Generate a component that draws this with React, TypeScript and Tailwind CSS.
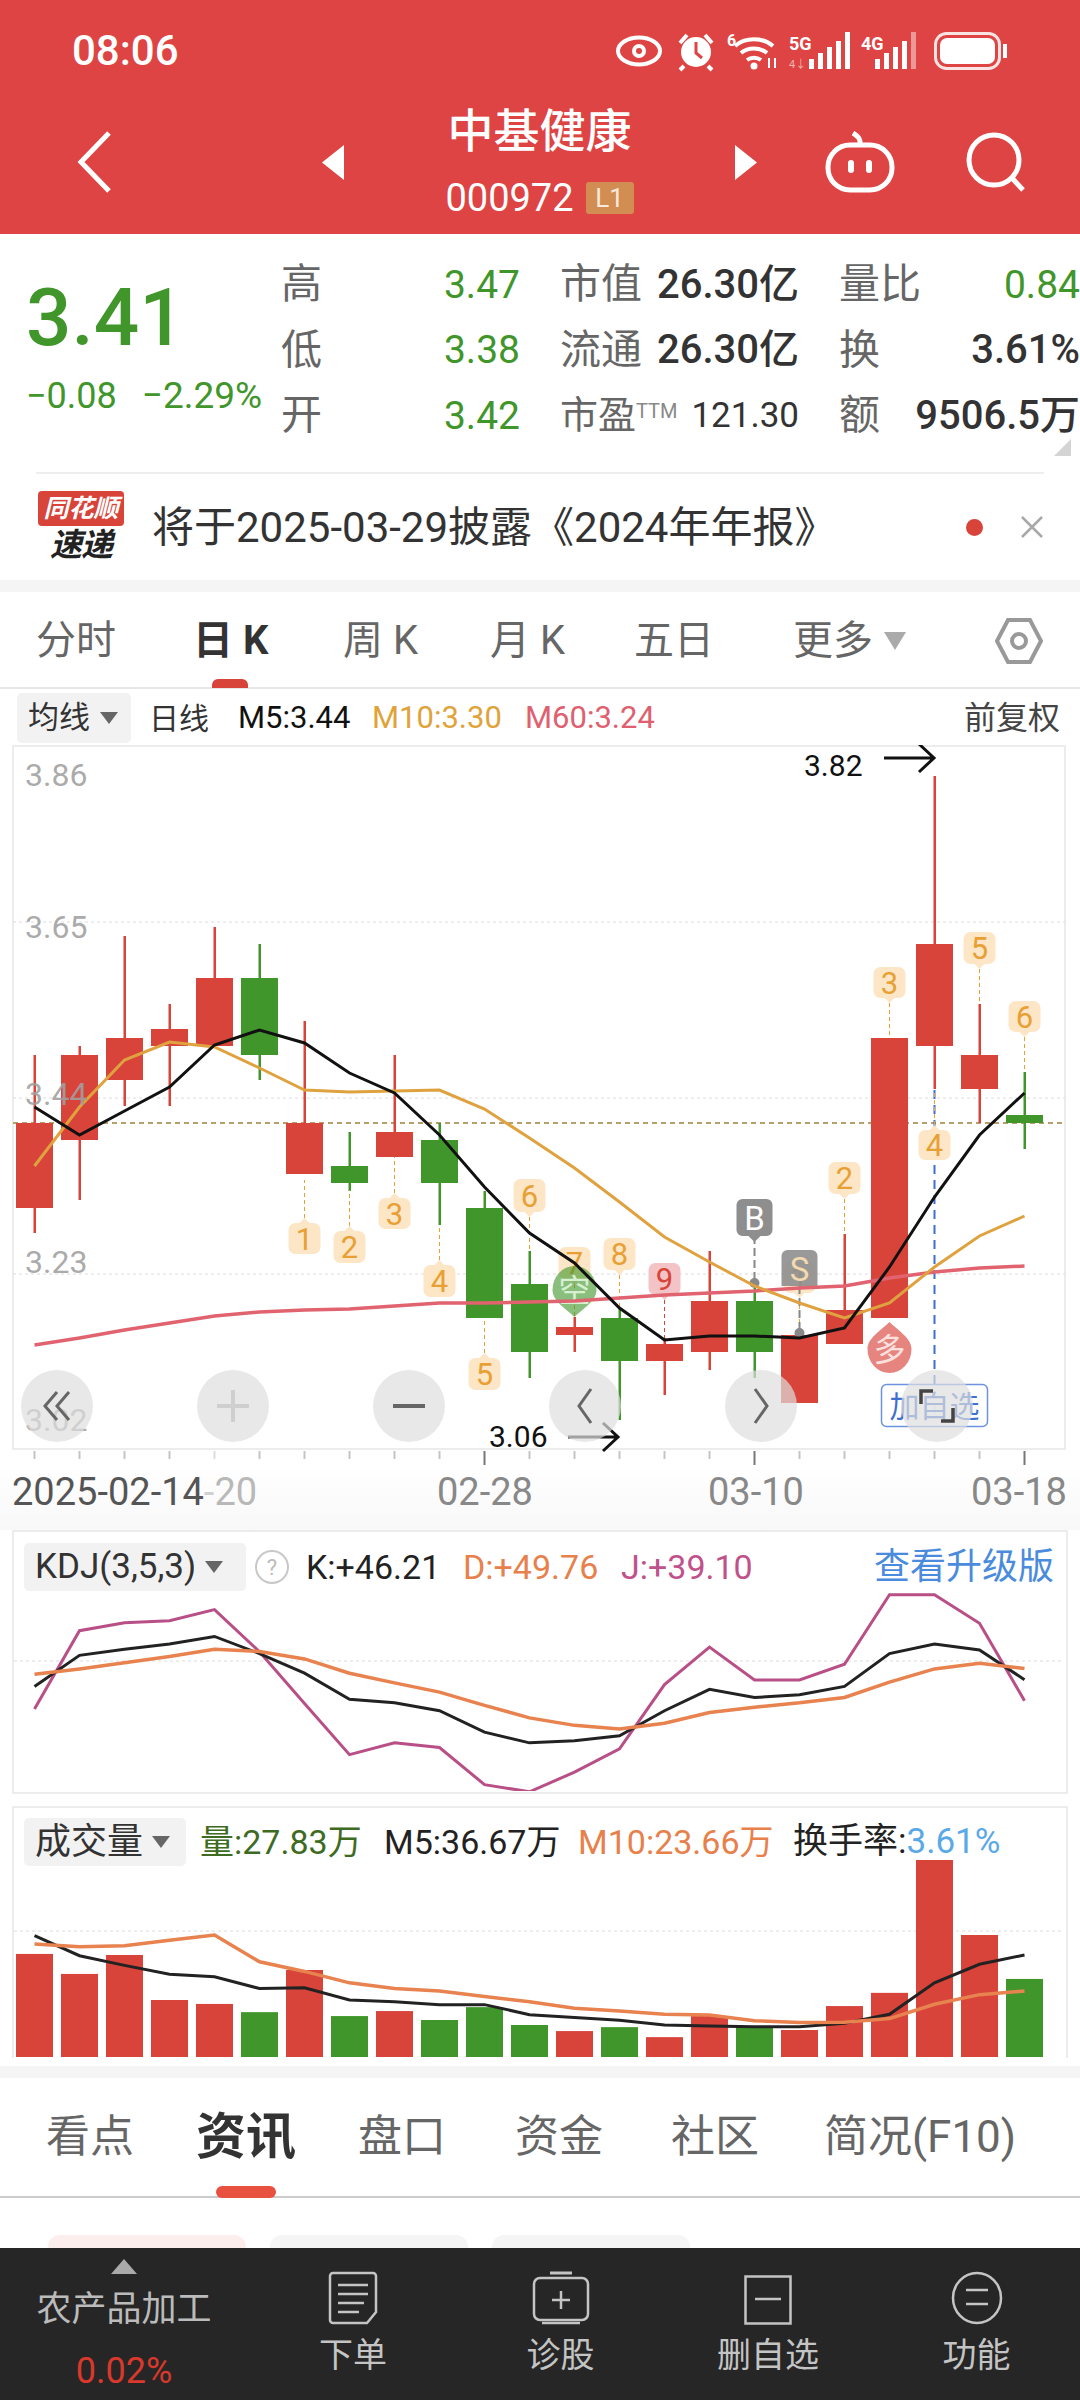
const RED = "#d8433a";
const GREEN = "#41962b";

const xAt = (i: number) => 34.5 + 45 * i;
const toPoints = (ys: number[]) => ys.map((y, i) => `${xAt(i)},${y}`).join(" ");

// [open/top, bottom, wickTop, wickBottom, up?]
const candles: [number, number, number, number, boolean][] = [
  [1123, 1208, 1055, 1233, true],
  [1055, 1140, 1046, 1200, true],
  [1038, 1080, 936, 1106, true],
  [1029, 1046, 1004, 1106, true],
  [978, 1046, 927, 1046, true],
  [978, 1055, 944, 1080, false],
  [1123, 1174, 1021, 1174, true],
  [1166, 1183, 1132, 1191, false],
  [1132, 1157, 1055, 1157, true],
  [1140, 1183, 1123, 1225, false],
  [1208, 1318, 1191, 1318, false],
  [1284, 1352, 1251, 1378, false],
  [1327, 1335, 1317, 1352, true],
  [1318, 1361, 1309, 1420, false],
  [1344, 1361, 1338, 1395, true],
  [1301, 1352, 1251, 1370, true],
  [1301, 1352, 1288, 1378, false],
  [1335, 1403, 1335, 1403, true],
  [1310, 1344, 1234, 1344, true],
  [1038, 1318, 1038, 1318, true],
  [944, 1046, 776, 1089, true],
  [1055, 1089, 1004, 1123, true],
  [1115, 1123, 1072, 1149, false],
];

const m5 = [1107, 1135, 1111, 1087, 1045, 1030, 1043, 1073, 1093, 1135, 1187, 1233, 1263, 1308, 1340, 1336, 1336, 1338, 1328, 1267, 1197, 1135, 1093];
const m10 = [1166, 1107, 1060, 1042, 1047, 1068, 1090, 1092, 1091, 1090, 1109, 1138, 1168, 1202, 1237, 1262, 1286, 1303, 1318, 1303, 1267, 1236, 1216];
const m60 = [1345, 1338, 1330, 1323, 1316, 1312, 1310, 1309, 1306, 1303, 1303, 1302, 1301, 1298, 1295, 1293, 1291, 1288, 1286, 1278, 1272, 1268, 1266];

const kdjY = (v: number[]) => v.map((y) => 1500 + y / 2.8);
const kdjJ = kdjY([585, 366, 344, 338, 307, 425, 570, 713, 680, 693, 797, 817, 762, 697, 517, 412, 504, 504, 460, 265, 265, 345, 562]);
const kdjK = kdjY([522, 435, 418, 403, 382, 430, 485, 558, 568, 590, 650, 680, 674, 660, 590, 530, 553, 545, 522, 430, 403, 420, 503]);
const kdjD = kdjY([488, 473, 456, 438, 418, 424, 445, 485, 512, 538, 575, 610, 631, 641, 625, 595, 580, 568, 553, 510, 473, 457, 472]);

const volBars: [number, boolean][] = [
  [1271, true], [1327, true], [1274, true], [1400, true], [1411, true], [1434, false], [1316, true], [1445, false],
  [1431, true], [1456, false], [1420, false], [1470, false], [1487, true], [1476, false], [1504, true], [1445, true],
  [1475, false], [1484, true], [1417, true], [1380, true], [1008, true], [1218, true], [1341, false],
];
const volM5 = kdjY([1220, 1276, 1303, 1328, 1335, 1368, 1366, 1400, 1405, 1413, 1413, 1441, 1449, 1457, 1470, 1473, 1475, 1475, 1465, 1440, 1352, 1300, 1274]);
const volM10 = kdjY([1243, 1251, 1248, 1233, 1218, 1293, 1320, 1352, 1368, 1375, 1390, 1405, 1423, 1431, 1440, 1442, 1458, 1463, 1462, 1452, 1412, 1385, 1375]);

// idx, top, bottom, label, pointer side, dash end y
const tags: [number, number, number, string, "up" | "down", number][] = [
  [6, 1218, 1254, "1", "up", 1180],
  [7, 1226, 1263, "2", "up", 1190],
  [8, 1193, 1229, "3", "up", 1157],
  [9, 1260, 1297, "4", "up", 1225],
  [10, 1353, 1390, "5", "up", 1318],
  [11, 1179, 1217, "6", "down", 1251],
  [12, 1247, 1284, "7", "down", 1317],
  [13, 1238, 1275, "8", "down", 1309],
  [18, 1162, 1199, "2", "down", 1234],
  [19, 967, 1003, "3", "down", 1038],
  [20, 1125, 1160, "4", "up", 1090],
  [21, 932, 969, "5", "down", 1004],
  [22, 1001, 1037, "6", "down", 1072],
];

const Tag = ({ i, top, bottom, label, dir, dash, fill = "#fde6c6", color = "#e8a035" }: { i: number; top: number; bottom: number; label: string; dir: "up" | "down"; dash: number; fill?: string; color?: string }) => {
  const x = xAt(i);
  const bodyTop = dir === "up" ? top + 5 : top;
  const bodyBottom = dir === "down" ? bottom - 5 : bottom;
  const tip = dir === "up" ? `${x - 6},${top + 6} ${x},${top} ${x + 6},${top + 6}` : `${x - 6},${bottom - 6} ${x},${bottom} ${x + 6},${bottom - 6}`;
  return (
    <g>
      <line x1={x} x2={x} y1={dir === "up" ? top : bottom} y2={dash} stroke={color} strokeWidth="1" strokeDasharray="4 3" />
      <rect x={x - 16} y={bodyTop} width="32" height={bodyBottom - bodyTop} rx="7" fill={fill} />
      <polygon points={tip} fill={fill} />
      <text x={x} y={(bodyTop + bodyBottom) / 2 + 11} textAnchor="middle" fontSize="31" fill={color}>{label}</text>
    </g>
  );
};

const KLine = () => (
  <svg viewBox="0 745 1080 720" className="block h-[720px] w-[1080px]">
    <rect x="13" y="746" width="1052" height="703" fill="#fff" stroke="#ececec" strokeWidth="2" />
    {[922, 1098, 1274].map((y) => (
      <line key={y} x1="13" x2="1065" y1={y} y2={y} stroke="#dcdcdc" strokeWidth="1" strokeDasharray="3 3" />
    ))}
    <line x1="13" x2="1065" y1="1123" y2="1123" stroke="#b9a06a" strokeWidth="2" strokeDasharray="5 4" />
    {candles.map(([top, bottom, wt, wb, up], i) => (
      <g key={i} fill={up ? RED : GREEN}>
        <rect x={xAt(i) - 1} y={wt} width="2.5" height={wb - wt} />
        <rect x={xAt(i) - 18.5} y={top} width="37" height={bottom - top} />
      </g>
    ))}
    <line x1={xAt(20)} x2={xAt(20)} y1="1090" y2="1420" stroke="#3f6fd0" strokeWidth="2" strokeDasharray="9 6" />
    {tags.map(([i, top, bottom, label, dir, dash]) => (
      <Tag key={`${i}-${label}`} i={i} top={top} bottom={bottom} label={label} dir={dir} dash={dash} />
    ))}
    <Tag i={14} top={1263} bottom={1300} label="9" dir="down" dash={1338} fill="#f3c3c6" color="#d8433a" />
    <Tag i={17} top={1262} bottom={1298} label="1" dir="down" dash={1333} />
    {/* B / S markers */}
    <line x1={xAt(16)} x2={xAt(16)} y1="1236" y2="1283" stroke="#888" strokeWidth="2" strokeDasharray="8 4" />
    <circle cx={xAt(16)} cy="1283" r="5" fill="#888" />
    <path d={`M${xAt(16) - 18} 1205a6 6 0 0 1 6-6h24a6 6 0 0 1 6 6v25a6 6 0 0 1-6 6h-6l-6 6-6-6h-6a6 6 0 0 1-6-6z`} fill="#8e8e8e" />
    <text x={xAt(16)} y="1230" textAnchor="middle" fontSize="33" fill="#fff">B</text>
    <line x1={xAt(17)} x2={xAt(17)} y1="1286" y2="1333" stroke="#888" strokeWidth="2" strokeDasharray="8 4" />
    <circle cx={xAt(17)} cy="1333" r="5" fill="#888" />
    <path d={`M${xAt(17) - 18} 1256a6 6 0 0 1 6-6h24a6 6 0 0 1 6 6v30h-36z`} fill="#8e8e8e" fillOpacity="0.9" />
    <text x={xAt(17)} y="1281" textAnchor="middle" fontSize="33" fill="#f3d9b0">S</text>
    {/* 空 / 多 */}
    <path d={`M${xAt(12)} 1317c-8-8-22-16-22-27a22 24 0 0 1 44 0c0 11-14 19-22 27z`} fill={GREEN} fillOpacity="0.62" />
    <text x={xAt(12)} y="1302" textAnchor="middle" fontSize="32" fill="#d8f0d0">空</text>
    <path d={`M${xAt(19)} 1322c8 8 22 16 22 27a22 24 0 0 1-44 0c0-11 14-19 22-27z`} fill={RED} fillOpacity="0.65" />
    <text x={xAt(19)} y="1361" textAnchor="middle" fontSize="32" fill="#fbe0de">多</text>
    <polyline points={toPoints(m60)} fill="none" stroke="#e0636f" strokeWidth="3.5" />
    <polyline points={toPoints(m10)} fill="none" stroke="#dfa23f" strokeWidth="3" />
    <polyline points={toPoints(m5)} fill="none" stroke="#111" strokeWidth="3" />
    {[["3.86", 786], ["3.65", 938], ["3.44", 1105], ["3.23", 1273], ["3.02", 1431]].map(([t, y]) => (
      <text key={t} x="25" y={y} fontSize="32" fill="#a0a0a0" fillOpacity="0.9">{t}</text>
    ))}
    <text x="804" y="776" fontSize="30" fill="#111">3.82</text>
    <path d="M884 758h50m-15-14 15 14-15 14" fill="none" stroke="#111" strokeWidth="3" />
    <text x="489" y="1447" fontSize="30" fill="#111">3.06</text>
    <path d="M568 1437h50m-15-14 15 14-15 14" fill="none" stroke="#111" strokeWidth="3" />
    <rect x="881.5" y="1384.5" width="106" height="42" rx="5" fill="#fff" fillOpacity="0.85" stroke="#6d93e0" strokeWidth="1.5" />
    <text x="934.5" y="1417" textAnchor="middle" fontSize="30" fill="#3f6fd0">加自选</text>
    {candles.map((_, i) => {
      const big = i === 10 || i === 16 || i === 22;
      return <line key={i} x1={xAt(i)} x2={xAt(i)} y1="1451" y2={big ? 1466 : 1459} stroke={big ? "#777" : i === 4 ? "#ddd" : "#c4c4c4"} strokeWidth="2" />;
    })}
  </svg>
);

const CircleButton = ({ children }: { children: React.ReactNode }) => (
  <div className="flex h-[72px] w-[72px] items-center justify-center rounded-full bg-[#dedede]/70">{children}</div>
);

const ChartButtons = () => (
  <div className="absolute left-[21px] top-[625px] flex gap-[104px]">
    <CircleButton>
      <svg viewBox="0 0 40 40" className="h-10 w-10" fill="none" stroke="#666" strokeWidth="3"><path d="M20 6 8 20l12 14M32 6 20 20l12 14" /></svg>
    </CircleButton>
    <CircleButton>
      <svg viewBox="0 0 40 40" className="h-10 w-10" fill="none" stroke="#cfcfcf" strokeWidth="4"><path d="M20 4v32M4 20h32" /></svg>
    </CircleButton>
    <CircleButton>
      <svg viewBox="0 0 40 40" className="h-10 w-10" fill="none" stroke="#666" strokeWidth="4"><path d="M4 20h32" /></svg>
    </CircleButton>
    <CircleButton>
      <svg viewBox="0 0 40 40" className="h-10 w-10" fill="none" stroke="#666" strokeWidth="3"><path d="M26 3 14 20l12 17" /></svg>
    </CircleButton>
    <CircleButton>
      <svg viewBox="0 0 40 40" className="h-10 w-10" fill="none" stroke="#666" strokeWidth="3"><path d="m14 3 12 17-12 17" /></svg>
    </CircleButton>
    <CircleButton>
      <svg viewBox="0 0 40 40" className="h-10 w-10" fill="none" stroke="#444" strokeWidth="3.5"><path d="M4 18V5h12M36 22v13H24" /></svg>
    </CircleButton>
  </div>
);

const StatusIcons = () => (
  <svg viewBox="610 26 404 50" className="h-[50px] w-[404px]" fill="none" stroke="#fff">
    <ellipse cx="639" cy="51" rx="21" ry="13.5" strokeWidth="4" />
    <circle cx="639" cy="51" r="7" fill="#fff" stroke="none" />
    <circle cx="639" cy="51" r="3" fill="#dd4443" stroke="none" />
    <circle cx="696" cy="52" r="15" fill="#fff" stroke="none" />
    <path d="M696 42v11l6 5" stroke="#dd4443" strokeWidth="3" />
    <path d="m680 43 7-8M712 43l-7-8M684 66l-4 4M708 66l4 4" strokeWidth="4" />
    <text x="727" y="46" fontSize="16" fontWeight="700" fill="#fff" stroke="none">6</text>
    <path d="M735 46c10-9 28-9 38 0M741 53c7-6 19-6 26 0M747 60c4-3 10-3 14 0" strokeWidth="4" />
    <circle cx="754" cy="66" r="3.5" fill="#fff" stroke="none" />
    <path d="M769 58v10M775 58v10" strokeWidth="2" />
    <text x="789" y="50" fontSize="18" fontWeight="700" fill="#fff" stroke="none">5G</text>
    <text x="789" y="68" fontSize="11" fill="#f3b3b2" stroke="none">4↓</text>
    <g fill="#fff" stroke="none">
      <rect x="809" y="59" width="5" height="10" />
      <rect x="818" y="53" width="5" height="16" />
      <rect x="827" y="47" width="5" height="22" />
      <rect x="836" y="41" width="5" height="28" />
      <rect x="845" y="32" width="5" height="37" />
    </g>
    <text x="861" y="50" fontSize="18" fontWeight="700" fill="#fff" stroke="none">4G</text>
    <g fill="#fff" stroke="none">
      <rect x="875" y="59" width="5" height="10" />
      <rect x="884" y="53" width="5" height="16" />
      <rect x="893" y="47" width="5" height="22" />
      <rect x="902" y="41" width="5" height="28" />
      <rect x="911" y="32" width="5" height="37" fillOpacity="0.45" />
    </g>
    <rect x="935.5" y="33.5" width="64" height="35" rx="11" strokeWidth="3" strokeOpacity="0.85" />
    <rect x="940" y="38" width="55" height="26" rx="7" fill="#fff" stroke="none" />
    <path d="M1005 44v14" strokeWidth="4" />
  </svg>
);

const Header = () => (
  <header className="h-[234px] bg-[#dd4443] text-white">
    <div className="flex h-[90px] items-start pl-[72px] pt-[26px]">
      <span className="text-[42px] leading-[50px] font-medium">08:06</span>
      <div className="ml-auto mr-[66px]"><StatusIcons /></div>
    </div>
    <div className="flex h-[144px] items-center">
      <svg viewBox="0 0 35 62" className="ml-[77px] h-[62px] w-[35px]" fill="none" stroke="#fff" strokeWidth="5"><path d="M32 2 4 31l28 29" /></svg>
      <svg viewBox="0 0 22 35" className="ml-[210px] h-[35px] w-[22px]"><polygon points="22,0 0,17.5 22,35" fill="#fff" /></svg>
      <div className="flex h-full w-[391px] flex-col items-center pt-[18px]">
        <div className="text-[46px] leading-[46px] font-medium">中基健康</div>
        <div className="mt-[28px] flex items-center">
          <span className="text-[38px] leading-[32px]">000972</span>
          <span className="ml-[12px] flex h-[32px] w-[48px] items-center justify-center rounded-[3px] bg-[#d18d52] text-[26px] text-[#fbeadb]">L1</span>
        </div>
      </div>
      <svg viewBox="0 0 22 35" className="h-[35px] w-[22px]"><polygon points="0,0 22,17.5 0,35" fill="#fff" /></svg>
      <svg viewBox="0 0 70 62" className="ml-[68px] h-[62px] w-[70px]" fill="none" stroke="#fff" strokeWidth="5">
        <rect x="3" y="14" width="64" height="45" rx="22" />
        <path d="M35 14C36 8 33 5 28 2" />
        <rect x="23" y="29" width="6" height="13" rx="3" fill="#fff" stroke="none" />
        <rect x="41" y="29" width="6" height="13" rx="3" fill="#fff" stroke="none" />
      </svg>
      <svg viewBox="0 0 60 60" className="ml-[71px] h-[60px] w-[60px]" fill="none" stroke="#fff" strokeWidth="5">
        <ellipse cx="28" cy="28" rx="25" ry="25" />
        <path d="m46 46 11 12" />
      </svg>
    </div>
  </header>
);

const rows = [
  { a: "高", av: "3.47", b: "市值", bv: "26.30亿", c: "量比", cv: "0.84", green: true },
  { a: "低", av: "3.38", b: "流通", bv: "26.30亿", c: "换", cv: "3.61%", green: false },
  { a: "开", av: "3.42", b: "市盈", bv: "121.30", c: "额", cv: "9506.5万", green: false },
];

const Quote = () => (
  <section className="relative flex h-[238px]">
    <div className="w-[281px] shrink-0 pl-[26px] pt-[44px] text-[#41962b]">
      <div className="text-[80px] leading-[80px] font-medium">3.41</div>
      <div className="mt-[20px] flex gap-[25px] text-[36px] leading-[36px] whitespace-nowrap">
        <span>−0.08</span>
        <span className="text-[37px]">−2.29%</span>
      </div>
    </div>
    <div className="pt-[18px]">
      {rows.map((r) => (
        <div key={r.a} className="grid h-[65.5px] grid-cols-[239px_239px_241px] items-center gap-x-[40px] whitespace-nowrap">
          <div className="flex items-center justify-between">
            <span className="text-[41px] text-[#666]">{r.a}</span>
            <span className="text-[39px] text-[#41962b]">{r.av}</span>
          </div>
          <div className="flex items-center justify-between">
            {r.b === "市盈" ? (
              <span className="text-[38px] text-[#666]">市盈<sup className="text-[20px] text-[#888]">TTM</sup></span>
            ) : (
              <span className="text-[41px] text-[#666]">{r.b}</span>
            )}
            <span className={r.b === "市盈" ? "text-[35px] text-[#333]" : "text-[40px] font-medium text-[#333]"}>{r.bv}</span>
          </div>
          <div className="flex items-center justify-between">
            <span className="text-[41px] text-[#666]">{r.c}</span>
            <span className={r.green ? "text-[39px] text-[#41962b]" : "text-[40px] font-medium text-[#333]"}>{r.cv}</span>
          </div>
        </div>
      ))}
    </div>
    <svg viewBox="0 0 17 17" className="absolute left-[1054px] top-[205px] h-[17px] w-[17px]"><polygon points="17,0 17,17 0,17" fill="#d4d4d4" /></svg>
  </section>
);

const Ticker = () => (
  <section>
    <div className="mx-[36px] h-[2px] bg-[#eeeeee]" />
    <div className="flex h-[106px] items-center">
      <div className="ml-[38px] flex h-[72px] w-[86px] flex-col items-center">
        <div className="flex h-[35px] w-[86px] items-center justify-center rounded-[4px] bg-[#d8433a] text-[25px] leading-none font-bold italic text-white">同花顺</div>
        <div className="mt-[2px] text-[32px] leading-[34px] font-bold italic tracking-[-1px] text-[#222]">速递</div>
      </div>
      <span className="ml-[28px] text-[42px] whitespace-nowrap text-[#333]">将于2025-03-29披露《2024年年报》</span>
      <span className="ml-auto h-[17px] w-[17px] rounded-full bg-[#d8433a]" />
      <svg viewBox="0 0 22 22" className="ml-[38px] mr-[37px] h-[22px] w-[22px]" fill="none" stroke="#a8a8a8" strokeWidth="2.5"><path d="m1 1 20 20M21 1 1 21" /></svg>
    </div>
  </section>
);

const periodTabs = [
  { label: "分时", cell: "w-[196px] pl-[36px] text-[#666]" },
  { label: "日 K", cell: "w-[147px] -translate-x-[3px] font-bold text-[#333]" },
  { label: "周 K", cell: "w-[147px] text-[#666]" },
  { label: "月 K", cell: "w-[144px] text-[#666]" },
  { label: "五日", cell: "w-[159px] text-[#666]" },
  { label: "更多", cell: "w-[91px] text-[#666]" },
];

const PeriodTabs = () => (
  <div className="relative flex h-[97px] items-center border-b-2 border-[#e6e6e6] pt-[3px] text-[40px] whitespace-nowrap">
    {periodTabs.map((t) => (
      <div key={t.label} className={t.cell}>{t.label}</div>
    ))}
    <svg viewBox="0 0 22 18" className="h-[18px] w-[22px]"><polygon points="0,0 22,0 11,18" fill="#aaaaaa" /></svg>
    <svg viewBox="0 0 48 46" className="ml-[89px] h-[46px] w-[48px]" fill="none" stroke="#999" strokeWidth="4">
      <path d="M13 2h22l11 21-11 21H13L2 23z" />
      <circle cx="24" cy="23" r="7" />
    </svg>
    <div className="absolute left-[212px] top-[87px] h-[9px] w-[36px] rounded-t-[6px] bg-[#d8433a]" />
  </div>
);

const Legend = () => (
  <div className="flex h-[56px] items-center whitespace-nowrap pt-[2px]">
    <div className="ml-[17px] flex h-[50px] w-[114px] items-center rounded-[5px] bg-[#f2f2f2] pl-[11px] text-[31px] text-[#333]">
      均线
      <svg viewBox="0 0 18 12" className="ml-[10px] h-[12px] w-[18px]"><polygon points="0,0 18,0 9,12" fill="#666" /></svg>
    </div>
    <span className="ml-[18px] w-[89px] text-[30px] text-[#333]">日线</span>
    <span className="w-[134px] text-[31px] text-[#111]">M5:3.44</span>
    <span className="w-[153px] text-[31px] text-[#e0a33a]">M10:3.30</span>
    <span className="w-[439px] text-[31px] text-[#e0606f]">M60:3.24</span>
    <span className="text-[32px] text-[#444]">前复权</span>
  </div>
);

const KlineDates = () => (
  <div className="flex h-[65px] items-start bg-gradient-to-b from-white to-[#f8f8f8] text-[38px] leading-[54px] whitespace-nowrap text-[#888]">
    <div className="w-[437px] pl-[12px]">
      <span className="text-[#555]">2025-02-14</span>
      <span className="text-[#d0d0d0]">-</span>
      <span className="text-[#b8b8b8]">20</span>
    </div>
    <div className="w-[271px]">02-28</div>
    <div className="w-[263px]">03-10</div>
    <div>03-18</div>
  </div>
);

const Kdj = () => (
  <section className="mx-[12px] h-[264px] border-2 border-[#ececec]">
    <div className="flex h-[60px] items-center whitespace-nowrap pt-[10px] text-[34px]">
      <div className="ml-[10px] flex h-[48px] w-[222px] items-center rounded-[5px] bg-[#f2f2f2] pl-[11px] text-[35px] text-[#333]">
        KDJ(3,5,3)
        <svg viewBox="0 0 18 12" className="ml-[9px] h-[12px] w-[18px]"><polygon points="0,0 18,0 9,12" fill="#666" /></svg>
      </div>
      <span className="ml-[9px] flex h-[34px] w-[34px] items-center justify-center rounded-full border-2 border-[#c8c8c8] text-[22px] text-[#bbb]">?</span>
      <span className="ml-[17px] w-[157px] text-[#222]">K:+46.21</span>
      <span className="w-[158px] text-[#e8804c]">D:+49.76</span>
      <span className="w-[253px] text-[#c0518a]">J:+39.10</span>
      <span className="text-[36px] text-[#4a8bdd]">查看升级版</span>
    </div>
    <svg viewBox="14 1592 1050 199" className="block h-[199px] w-[1050px]">
      <line x1="14" x2="1064" y1="1661" y2="1661" stroke="#dcdcdc" strokeDasharray="3 3" />
      <polyline points={toPoints(kdjJ)} fill="none" stroke="#b84f86" strokeWidth="3" />
      <polyline points={toPoints(kdjK)} fill="none" stroke="#222" strokeWidth="3" />
      <polyline points={toPoints(kdjD)} fill="none" stroke="#e8824e" strokeWidth="3.5" />
    </svg>
  </section>
);

const Volume = () => (
  <section className="mx-[12px] mt-[12px] h-[252px] border-2 border-b-0 border-[#ececec]">
    <div className="flex h-[58px] items-center whitespace-nowrap pt-[10px] text-[34px]">
      <div className="ml-[10px] flex h-[48px] w-[162px] items-center rounded-[5px] bg-[#f2f2f2] pl-[11px] text-[36px] text-[#333]">
        成交量
        <svg viewBox="0 0 18 12" className="ml-[9px] h-[12px] w-[18px]"><polygon points="0,0 18,0 9,12" fill="#666" /></svg>
      </div>
      <span className="ml-[14px] w-[184px] text-[#3e6b22]">量:27.83万</span>
      <span className="w-[194px] text-[#222]">M5:36.67万</span>
      <span className="w-[215px] text-[#e8804c]">M10:23.66万</span>
      <span className="text-[35px] text-[#222]">换手率:<span className="text-[#5aa9e6]">3.61%</span></span>
    </div>
    <svg viewBox="14 1866 1050 191" className="block h-[191px] w-[1050px] overflow-visible">
      <line x1="14" x2="1064" y1="1931" y2="1931" stroke="#dcdcdc" strokeDasharray="3 3" />
      {volBars.map(([y, up], i) => {
        const top = 1500 + y / 2.8;
        return <rect key={i} x={xAt(i) - 18.5} y={top} width="37" height={2057 - top} fill={up ? RED : GREEN} />;
      })}
      <polyline points={toPoints(volM5)} fill="none" stroke="#222" strokeWidth="3" />
      <polyline points={toPoints(volM10)} fill="none" stroke="#e8824e" strokeWidth="3.5" />
    </svg>
  </section>
);

const infoTabs = [
  { label: "看点", cell: "w-[196px] pl-[46px] text-[44px] text-[#666]" },
  { label: "资讯", cell: "w-[162px] text-[50px] font-bold text-[#333]" },
  { label: "盘口", cell: "w-[157px] text-[44px] text-[#666]" },
  { label: "资金", cell: "w-[156px] text-[44px] text-[#666]" },
  { label: "社区", cell: "w-[153px] text-[44px] text-[#666]" },
  { label: "简况(F10)", cell: "text-[44px] text-[#666]" },
];

const InfoTabs = () => (
  <div className="relative flex h-[120px] items-center border-b-2 border-[#cccccc] whitespace-nowrap">
    {infoTabs.map((t) => (
      <div key={t.label} className={t.cell}>{t.label}</div>
    ))}
    <div className="absolute left-[216px] top-[108px] h-[12px] w-[60px] rounded-full bg-[#e85040]" />
  </div>
);

const BottomItem = ({ label, width, children }: { label: string; width: string; children: React.ReactNode }) => (
  <div className={`flex flex-col items-center pt-[8px] ${width}`}>
    <div className="flex h-[58px] items-end">{children}</div>
    <span className="mt-[10px] text-[34px] leading-[40px] text-[#c4c4c4]">{label}</span>
  </div>
);

const BottomBar = () => (
  <footer className="flex h-[153px] bg-[#262626] pt-[11px] whitespace-nowrap">
    <div className="flex w-[248px] flex-col items-center">
      <svg viewBox="0 0 26 15" className="h-[15px] w-[26px]"><polygon points="13,0 26,15 0,15" fill="#aaaaaa" /></svg>
      <span className="mt-[14px] text-[35px] leading-[44px] text-[#bbbbbb]">农产品加工</span>
      <span className="mt-[19px] text-[36px] leading-[40px] text-[#d8392c]">0.02%</span>
    </div>
    <BottomItem label="下单" width="w-[210px]">
      <svg viewBox="0 0 50 54" className="h-[54px] w-[50px]" fill="none" stroke="#c4c4c4" strokeWidth="2.5">
        <path d="M5 2h40a3 3 0 0 1 3 3v36l-9 11H5a3 3 0 0 1-3-3V5a3 3 0 0 1 3-3z" />
        <path d="M10 14h30M10 23h30M10 32h26M10 41h21" />
      </svg>
    </BottomItem>
    <BottomItem label="诊股" width="w-[205px]">
      <svg viewBox="0 0 58 54" className="h-[54px] w-[58px]" fill="none" stroke="#c4c4c4" strokeWidth="2.5">
        <path d="M18 2h22" strokeWidth="3" />
        <rect x="2" y="7" width="54" height="42" rx="6" />
        <path d="M29 20v18M20 29h18M10 52h38" />
      </svg>
    </BottomItem>
    <BottomItem label="删自选" width="w-[210px]">
      <svg viewBox="0 0 48 50" className="h-[50px] w-[48px]" fill="none" stroke="#c4c4c4" strokeWidth="2.5">
        <rect x="1.5" y="1.5" width="45" height="47" />
        <path d="M11 24h26" />
      </svg>
    </BottomItem>
    <BottomItem label="功能" width="w-[207px]">
      <svg viewBox="0 0 52 54" className="h-[54px] w-[52px]" fill="none" stroke="#c4c4c4" strokeWidth="2.5">
        <ellipse cx="26" cy="27" rx="24" ry="25" />
        <path d="M15 19h22M15 33h22" />
      </svg>
    </BottomItem>
  </footer>
);

export default function App() {
  return (
    <div className="relative h-[2400px] w-[1080px] overflow-hidden bg-white font-['Roboto','Noto_Sans_CJK_SC',sans-serif]">
      <Header />
      <Quote />
      <Ticker />
      <div className="h-[12px] bg-[#f5f5f5]" />
      <PeriodTabs />
      <Legend />
      <div className="relative">
        <KLine />
        <ChartButtons />
      </div>
      <KlineDates />
      <Kdj />
      <Volume />
      <div className="h-[8px]" />
      <div className="h-[12px] bg-[#f5f5f5]" />
      <InfoTabs />
      <div className="flex h-[50px] gap-[24px] overflow-hidden pl-[48px] pt-[37px]">
        <div className="h-[40px] w-[198px] rounded-t-[12px] bg-[#fdeeee]" />
        <div className="h-[40px] w-[198px] rounded-t-[12px] bg-[#f5f5f5]" />
        <div className="h-[40px] w-[198px] rounded-t-[12px] bg-[#f5f5f5]" />
      </div>
      <BottomBar />
    </div>
  );
}
